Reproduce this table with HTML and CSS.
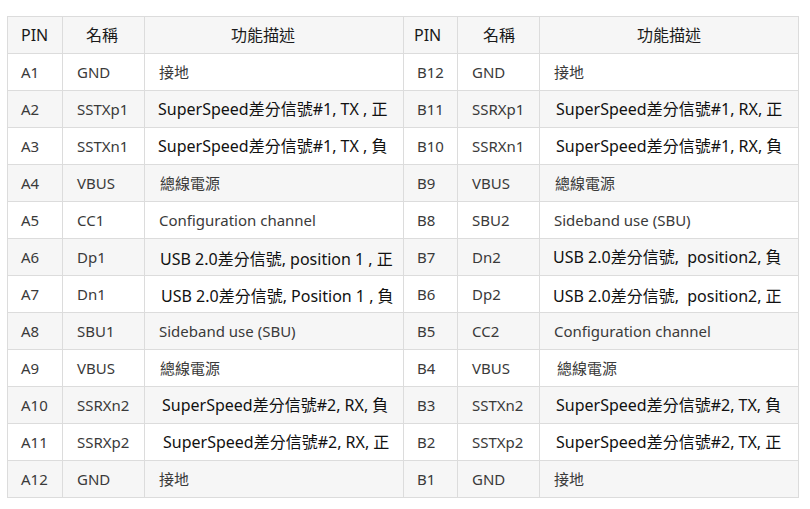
FILE: index.html
```html
<!DOCTYPE html>
<html lang="zh-Hant">
<head>
<meta charset="utf-8">
<title>USB Type-C PIN</title>
<link rel="stylesheet" href="styles.css">
</head>
<body>
<table class="pins">
  <colgroup>
    <col class="c-pin"><col class="c-name"><col class="c-desc">
    <col class="c-pin2"><col class="c-name"><col class="c-desc">
  </colgroup>
  <thead>
    <tr>
      <th class="h-pin">PIN</th><th class="h-name">名稱</th><th class="h-desc">功能描述</th>
      <th class="h-pin2">PIN</th><th class="h-name2">名稱</th><th class="h-desc2">功能描述</th>
    </tr>
  </thead>
  <tbody>
    <tr><td>A1</td><td>GND</td><td>接地</td><td>B12</td><td>GND</td><td>接地</td></tr>
    <tr><td>A2</td><td>SSTXp1</td><td class="em">SuperSpeed差分信號#1, TX , 正</td><td>B11</td><td>SSRXp1</td><td class="em in2">SuperSpeed差分信號#1, RX, 正</td></tr>
    <tr><td>A3</td><td>SSTXn1</td><td class="em">SuperSpeed差分信號#1, TX , 負</td><td>B10</td><td>SSRXn1</td><td class="em in2">SuperSpeed差分信號#1, RX, 負</td></tr>
    <tr><td>A4</td><td>VBUS</td><td class="in1">總線電源</td><td>B9</td><td>VBUS</td><td class="in1">總線電源</td></tr>
    <tr><td>A5</td><td>CC1</td><td>Configuration channel</td><td>B8</td><td>SBU2</td><td>Sideband use (SBU)</td></tr>
    <tr><td>A6</td><td>Dp1</td><td class="em low in1">USB 2.0差分信號, position 1 , 正</td><td>B7</td><td>Dn2</td><td class="em">USB 2.0差分信號,&nbsp; position2, 負</td></tr>
    <tr><td>A7</td><td>Dn1</td><td class="em low in2">USB 2.0差分信號, Position 1 , 負</td><td>B6</td><td>Dp2</td><td class="em low">USB 2.0差分信號,&nbsp; position2, 正</td></tr>
    <tr><td>A8</td><td>SBU1</td><td>Sideband use (SBU)</td><td>B5</td><td>CC2</td><td>Configuration channel</td></tr>
    <tr><td>A9</td><td>VBUS</td><td class="in1">總線電源</td><td>B4</td><td>VBUS</td><td class="in3">總線電源</td></tr>
    <tr><td>A10</td><td>SSRXn2</td><td class="em in3">SuperSpeed差分信號#2, RX, 負</td><td>B3</td><td>SSTXn2</td><td class="em in2">SuperSpeed差分信號#2, TX, 負</td></tr>
    <tr><td>A11</td><td>SSRXp2</td><td class="em in4">SuperSpeed差分信號#2, RX, 正</td><td>B2</td><td>SSTXp2</td><td class="em in2">SuperSpeed差分信號#2, TX, 正</td></tr>
    <tr><td>A12</td><td>GND</td><td>接地</td><td>B1</td><td>GND</td><td>接地</td></tr>
  </tbody>
</table>
</body>
</html>
```

FILE: styles.css
```css
html, body {
  margin: 0;
  padding: 0;
  background: #ffffff;
}

body {
  padding: 16px 0 0 7px;
  font-family: "Noto Sans", "Noto Sans CJK TC", sans-serif;
}

.pins {
  border-collapse: collapse;
  table-layout: fixed;
  width: 792px;
  color: #3a3a3a;
  font-size: 15px;
}

.c-pin { width: 55px; }
.c-name { width: 82px; }
.c-desc { width: 259px; }
.c-pin2 { width: 54px; }

.pins th,
.pins td {
  border: 1px solid #dcdcdc;
  height: 37px;
  padding: 0 0 0 14px;
  box-sizing: border-box;
  vertical-align: middle;
  white-space: nowrap;
  overflow: hidden;
  line-height: 20px;
}

.pins th {
  font-weight: normal;
  color: #1a1a1a;
  font-size: 16px;
  text-align: left;
}

.pins thead tr,
.pins tbody tr:nth-child(even) {
  background: #f6f6f6;
}

.pins td:first-child,
.pins td:nth-child(4) {
  padding-left: 13px;
}

.h-pin { padding-left: 13px !important; }
.h-name { padding-left: 23px !important; }
.h-desc { padding-left: 86px !important; }
.h-pin2 { padding-left: 10px !important; }
.h-name2 { padding-left: 25px !important; }
.h-desc2 { padding-left: 97px !important; }

.pins td.em {
  color: #111111;
  font-size: 16px;
  padding-left: 13px;
}

.pins td.low {
  padding-top: 4px;
}

.pins td.in1 { padding-left: 15px; }
.pins td.in2 { padding-left: 16px; }
.pins td.in3 { padding-left: 17px; }
.pins td.in4 { padding-left: 18px; }
```
